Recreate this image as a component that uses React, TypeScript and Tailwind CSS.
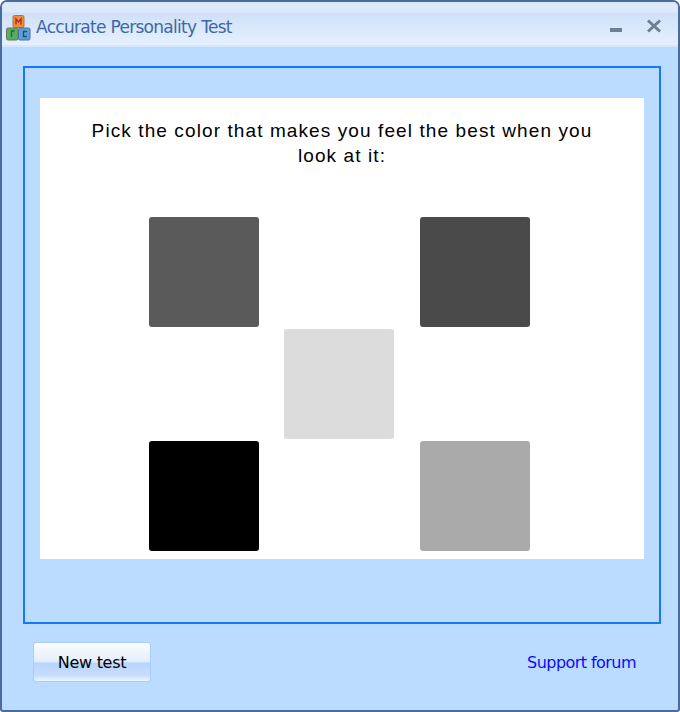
const Logo = () => (
  <svg width="26" height="28" viewBox="0 0 26 28" className="shrink-0">
    <rect x="8" y="1.500" width="11" height="12" rx="1.500" fill="#f08a3c" stroke="#a8734a" />
    <rect x="1.500" y="14" width="11.500" height="12" rx="1.500" fill="#58ad62" stroke="#5d7a5d" />
    <rect x="13.500" y="14" width="11.500" height="12" rx="1.500" fill="#5a9fdc" stroke="#566f88" />
    <path d="M11 10.500V5l2.500 3L16 5v5.500" fill="none" stroke="#a8321c" strokeWidth="1.400" />
    <path d="M9.500 17H6.500v6" fill="none" stroke="#1d6b35" strokeWidth="1.400" />
    <path d="M22 17.500h-3.500v5H22" fill="none" stroke="#1c4c86" strokeWidth="1.400" />
  </svg>
);

const squares = ["bg-[#5a5a5a]", "", "bg-[#4a4a4a]", "", "bg-[#dcdcdc]", "", "bg-[#000000]", "", "bg-[#aaaaaa]"];

export default function App() {
  return (
    <div className="w-[680px] h-[712px] bg-white font-['Liberation_Sans',sans-serif]">
      <div className="w-full h-full flex flex-col bg-[#bbdcff] border-2 border-[#4a6c9c] rounded-t-[7px] rounded-b-[3px] overflow-hidden">
        <div className="h-[45px] shrink-0 flex items-center pt-[9px] pl-[3px] pr-[16px] border-b-2 border-[#d6e7fc] bg-[linear-gradient(#dce9fb_0,#dce9fb_10px,#cfe0f8_11px,#e6f1ff_100%)]">
          <Logo />
          <span className="ml-[5px] text-[17px] text-[#3c68a8] font-['DejaVu_Sans',sans-serif] tracking-[-0.7px]">Accurate Personality Test</span>
          <div className="ml-auto flex items-center gap-[24px] pb-[5px]">
            <div className="w-[12px] h-[4px] mt-[9px] bg-[#6d7f97]" />
            <svg width="16" height="14" viewBox="0 0 16 14">
              <path d="M2 1.500l12 11M14 1.500l-12 11" stroke="#6d7f97" strokeWidth="3" fill="none" />
            </svg>
          </div>
        </div>

        <div className="flex-1 flex flex-col pl-[21px] pr-[17px] pt-[19px]">
          <div className="h-[558px] shrink-0 border-2 border-[#1478fa] px-[15px] pt-[30px]">
            <div className="h-[461px] bg-white flex flex-col">
              <p className="mt-[20px] w-[530px] self-center text-center text-[19px] leading-[25px] text-black tracking-[1.1px]">
                Pick the color that makes you feel the best when you look at it:
              </p>
              <div className="mt-[49px] ml-[109px] grid grid-cols-[110px_110px_110px] auto-rows-[110px] gap-x-[25.300px] gap-y-[2px]">
                {squares.map((color, i) => (
                  <div key={i} className={color ? `${color} rounded-[3px]` : ""} />
                ))}
              </div>
            </div>
          </div>

          <div className="flex items-center justify-between pl-[10px] pr-[25px] mt-[18px]">
            <button className="w-[118px] h-[40px] pt-[2px] rounded-[3px] border border-[#a9cdf8] text-[16px] text-black font-['DejaVu_Sans',sans-serif] tracking-[-0.3px] bg-[linear-gradient(#fafdff_0,#e2edfd_50%,#b9d5fd_52%,#c5dcfd_85%,#f0f7ff_100%)]">
              New test
            </button>
            <a className="pt-[2px] text-[16px] text-[#0a0aff] font-['DejaVu_Sans',sans-serif] tracking-[-0.55px]">Support forum</a>
          </div>
        </div>
      </div>
    </div>
  );
}
